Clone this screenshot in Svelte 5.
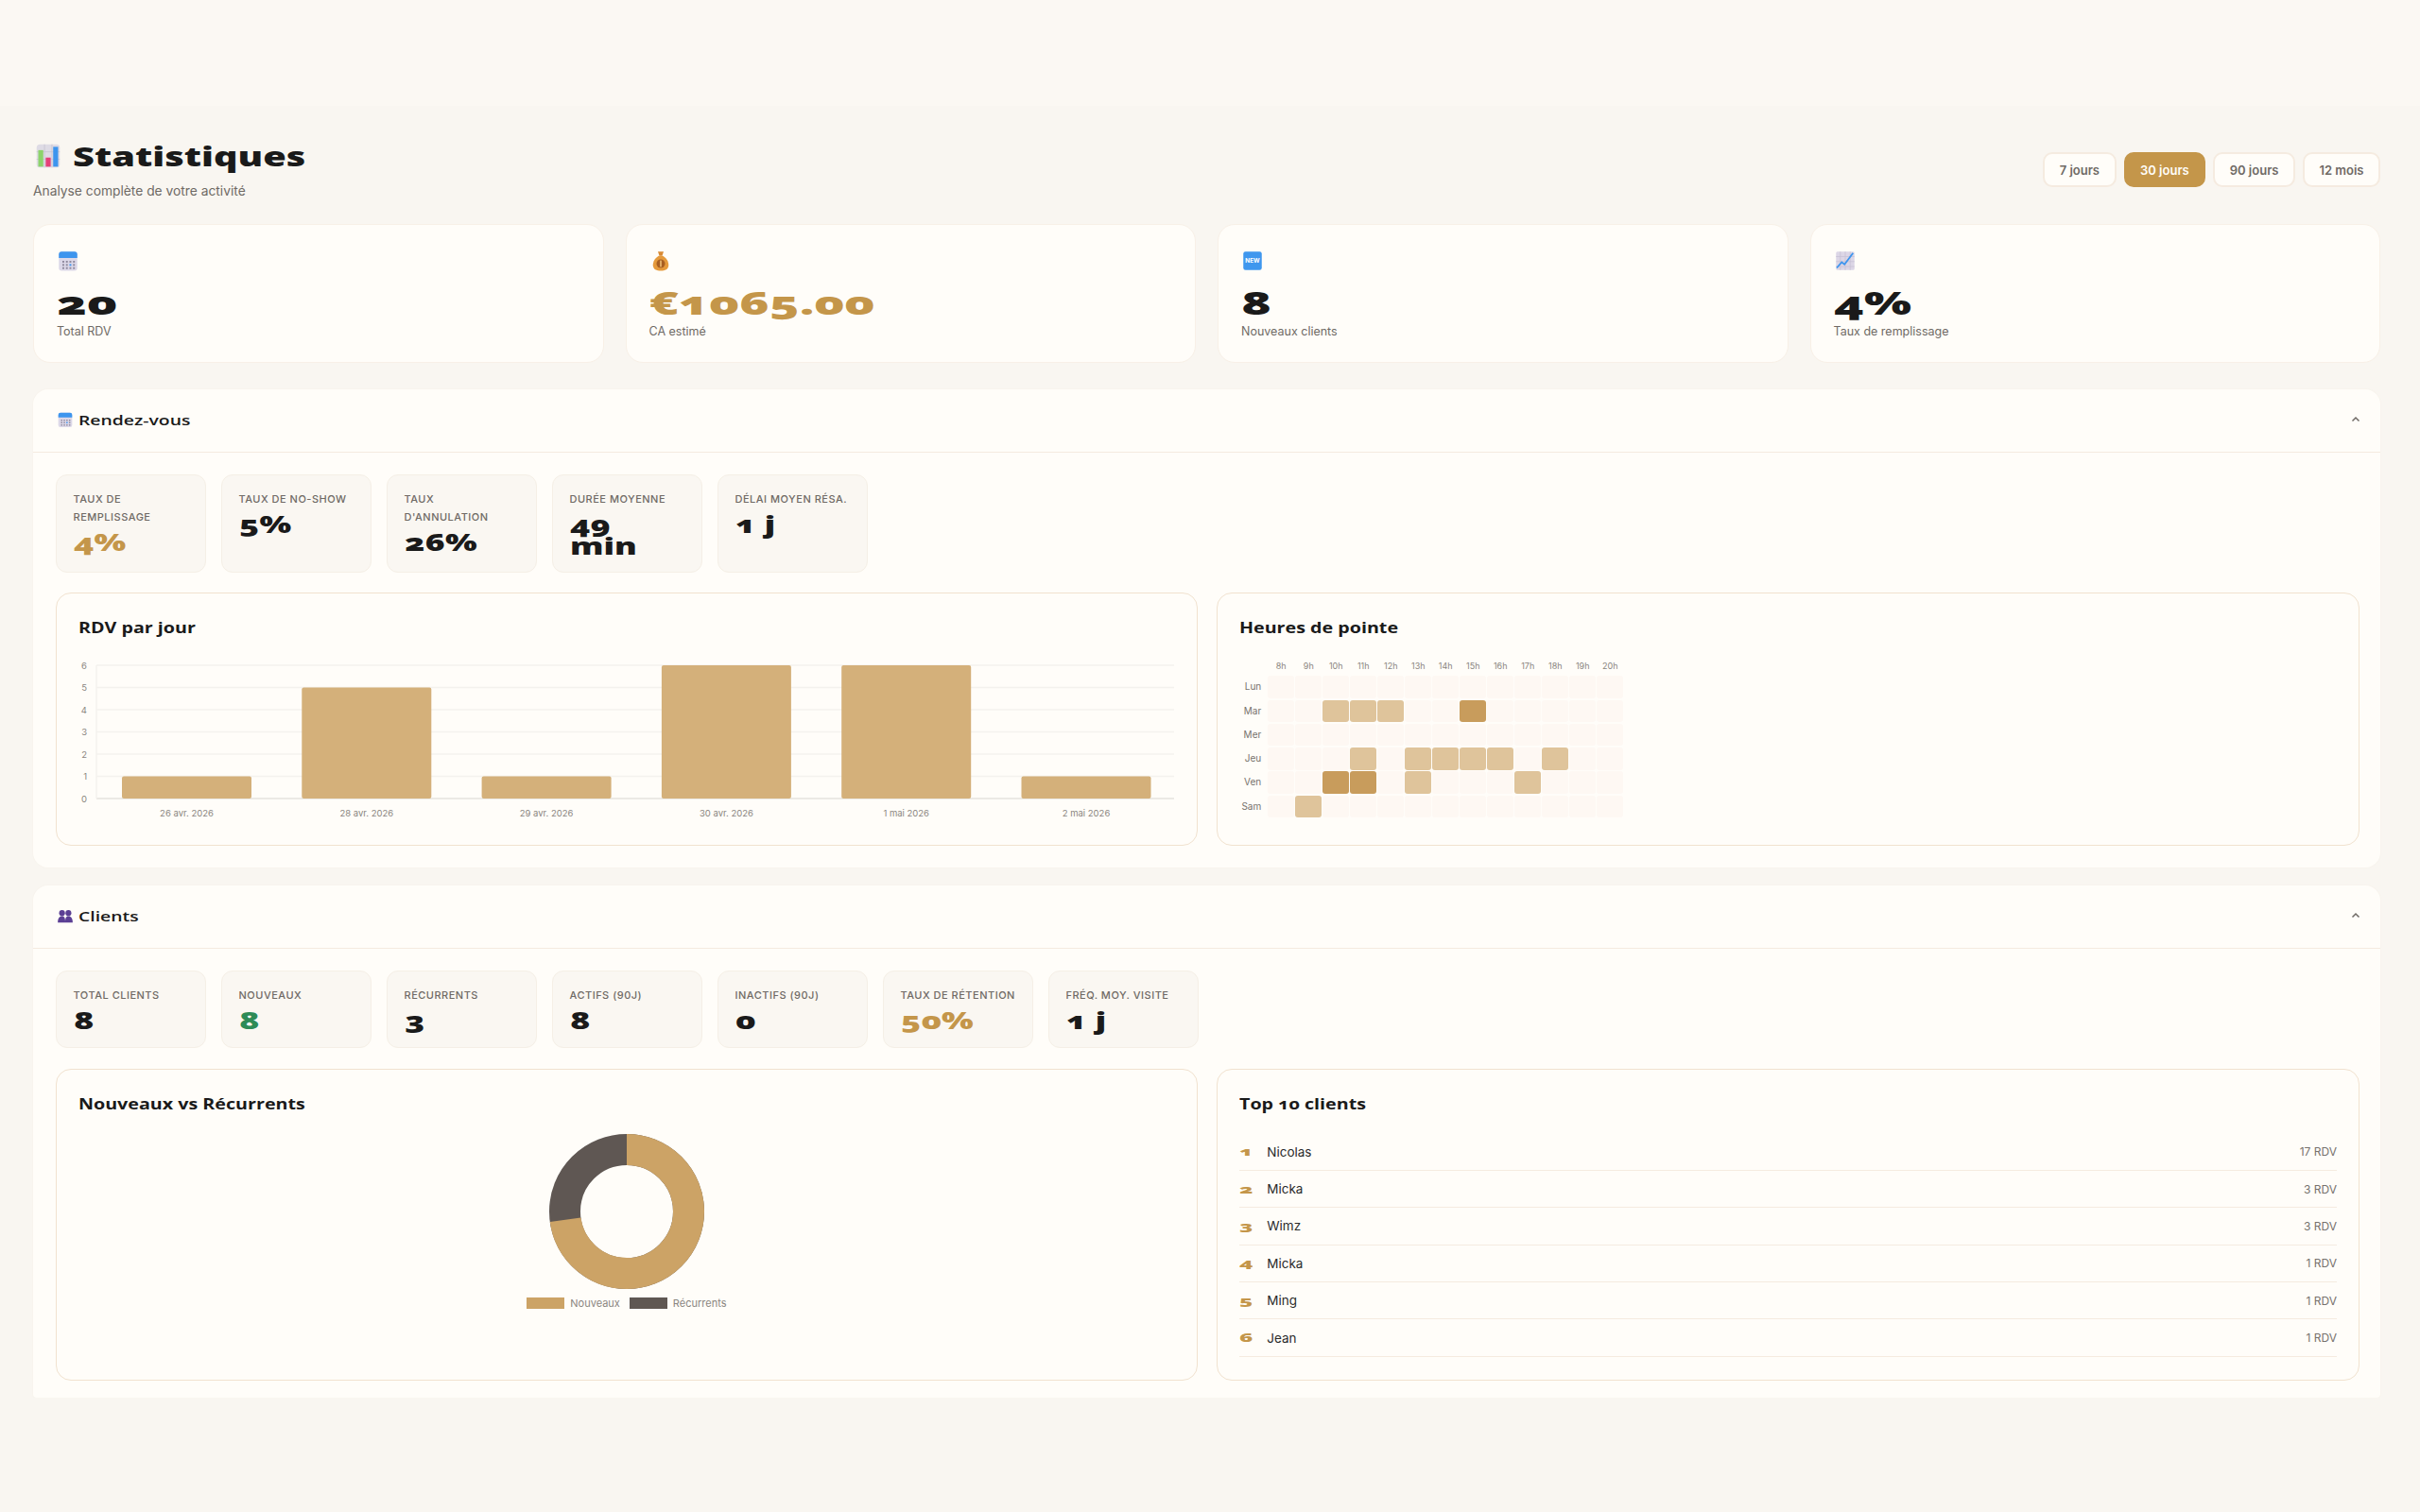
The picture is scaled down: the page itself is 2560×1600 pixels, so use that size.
<script>
  const periods = ["7 jours", "30 jours", "90 jours", "12 mois"];
  let period = $state("30 jours");

  const stats = [
    { icon: "calendar", value: "20", label: "Total RDV" },
    { icon: "bag", value: "€1065.00", label: "CA estimé", tone: "gold" },
    { icon: "new", value: "8", label: "Nouveaux clients" },
    { icon: "trend", value: "4%", label: "Taux de remplissage" }
  ];

  const rdvKpis = [
    { label: "Taux de remplissage", value: "4%", tone: "gold" },
    { label: "Taux de no-show", value: "5%" },
    { label: "Taux d'annulation", value: "26%" },
    { label: "Durée moyenne", value: "49\nmin" },
    { label: "Délai moyen résa.", value: "1 j" }
  ];

  const clientKpis = [
    { label: "Total clients", value: "8" },
    { label: "Nouveaux", value: "8", tone: "green" },
    { label: "Récurrents", value: "3" },
    { label: "Actifs (90j)", value: "8" },
    { label: "Inactifs (90j)", value: "0" },
    { label: "Taux\u00a0de\u00a0rétention", value: "50%", tone: "gold" },
    { label: "Fréq. moy. visite", value: "1 j" }
  ];

  const bars = [
    { label: "26 avr. 2026", n: 1 },
    { label: "28 avr. 2026", n: 5 },
    { label: "29 avr. 2026", n: 1 },
    { label: "30 avr. 2026", n: 6 },
    { label: "1 mai 2026", n: 6 },
    { label: "2 mai 2026", n: 1 }
  ];
  const barTop = 10;
  const barStep = 23.5;
  const ticks = [0, 1, 2, 3, 4, 5, 6];

  const hours = ["8h", "9h", "10h", "11h", "12h", "13h", "14h", "15h", "16h", "17h", "18h", "19h", "20h"];
  // one string per day, one digit per hour: 0 empty, 1 some, 2 busy
  const heat = [
    { day: "Lun", cells: "0000000000000" },
    { day: "Mar", cells: "0011100200000" },
    { day: "Mer", cells: "0000000000000" },
    { day: "Jeu", cells: "0001011110100" },
    { day: "Ven", cells: "0022010001000" },
    { day: "Sam", cells: "0100000000000" }
  ];

  const top = [
    { name: "Nicolas", n: "17 RDV" },
    { name: "Micka", n: "3 RDV" },
    { name: "Wimz", n: "3 RDV" },
    { name: "Micka", n: "1 RDV" },
    { name: "Ming", n: "1 RDV" },
    { name: "Jean", n: "1 RDV" }
  ];

  // donut: 8 nouveaux, 3 récurrents
  const R = 65.5;
  const C = 2 * Math.PI * R;
  const part = (8 / 11) * C;
</script>

{#snippet emoji(name, size)}
  <svg class="emoji" width={size} height={size} viewBox="0 0 32 32">
    {#if name === "calendar"}
      <rect x="3" y="3" width="26" height="27" rx="4" fill="#dcd8e8" />
      <path d="M3 12V7a4 4 0 0 1 4-4h18a4 4 0 0 1 4 4v5z" fill="#3d95ee" />
      {#each [16, 20.5, 25] as y}
        {#each [8, 13, 18, 23] as x}
          <rect {x} {y} width="2.6" height="2.6" fill={x === 18 && y === 20.5 ? "#3d95ee" : "#8f8a9e"} />
        {/each}
      {/each}
    {:else if name === "bag"}
      <path d="M12 3h8l-2 6h-4z" fill="#d98a35" />
      <path d="M13 9h6c5 3 8 8 8 13 0 6-5 8-11 8S5 28 5 22c0-5 3-10 8-13z" fill="#e59a3c" />
      <circle cx="16" cy="20" r="6" fill="#a85f22" />
      <rect x="15" y="15.5" width="2" height="9" fill="#f1c27a" />
    {:else if name === "new"}
      <rect x="3" y="3" width="26" height="26" rx="3" fill="#3f97ee" />
      <text x="16" y="19" text-anchor="middle" class="newtext">NEW</text>
    {:else if name === "trend"}
      <rect x="3" y="3" width="26" height="26" rx="2" fill="#dcd6e6" />
      <path d="M9 3v26M16 3v26M23 3v26M3 10h26M3 17h26M3 24h26" stroke="#c7c0d4" stroke-width="1" />
      <path d="M4 26l7-8 4 3 12-16" fill="none" stroke="#3d95ee" stroke-width="2.4" />
    {:else if name === "bars"}
      <rect x="2" y="2" width="28" height="28" rx="4" fill="#dedbe5" />
      <path d="M11.500 2v28M20.500 2v28M2 11h28M2 20h28" stroke="#c9c6d1" stroke-width="1" />
      <rect x="4" y="9" width="6" height="20" fill="#8cd36b" />
      <rect x="13" y="18" width="6" height="11" fill="#e53f78" />
      <rect x="22" y="5" width="6" height="24" fill="#3d95ee" />
    {:else if name === "people"}
      <g fill="#5b3f94">
        <circle cx="10" cy="11" r="5.500" />
        <path d="M2 29c0-8 3-12 8-12s6 4 6 12z" />
        <circle cx="22" cy="11" r="5.500" />
        <path d="M16 29c0-8 1-12 6-12s8 4 8 12z" />
      </g>
    {/if}
  </svg>
{/snippet}

{#snippet chevron()}
  <svg class="chevron" width="12" height="12" viewBox="0 0 12 12">
    <path d="M2.500 7.500L6 4l3.500 3.500" fill="none" stroke="#6f6a65" stroke-width="1.500" />
  </svg>
{/snippet}

{#snippet kpiRow(items)}
  <div class="kpis">
    {#each items as k}
      <div class="kpi">
        <div class="kpi-label">{k.label}</div>
        <div class="kpi-value wide {k.tone ?? ''}">{k.value}</div>
      </div>
    {/each}
  </div>
{/snippet}

<div class="strip"></div>

<main>
  <header>
    <div>
      <h1>{@render emoji("bars", 28)}<span class="wide">Statistiques</span></h1>
      <p>Analyse complète de votre activité</p>
    </div>
    <div class="periods">
      {#each periods as p}
        <button class:active={p === period} onclick={() => (period = p)}>{p}</button>
      {/each}
    </div>
  </header>

  <div class="stats">
    {#each stats as s}
      <div class="stat">
        {@render emoji(s.icon, 24)}
        <div class="stat-value wide {s.tone ?? ''}">{s.value}</div>
        <div class="stat-label">{s.label}</div>
      </div>
    {/each}
  </div>

  <section>
    <div class="section-head">
      <h2>{@render emoji("calendar", 18)}<span class="wide">Rendez-vous</span></h2>
      {@render chevron()}
    </div>
    <div class="section-body">
      {@render kpiRow(rdvKpis)}
      <div class="charts tall">
        <div class="chart">
          <h3><span class="wide">RDV par jour</span></h3>
          <svg class="bars" width="1160" height="182" viewBox="0 0 1160 182">
            {#each ticks as t}
              <line x1="19" x2="1159" y1={barTop + (6 - t) * barStep} y2={barTop + (6 - t) * barStep} class={t === 0 ? "axis" : "grid"} />
              <text x="9" y={barTop + (6 - t) * barStep + 3.500} text-anchor="end" class="tick">{t}</text>
            {/each}
            <line x1="19" x2="19" y1={barTop} y2={barTop + 6 * barStep} class="grid" />
            {#each bars as b, i}
              <rect x={46 + i * 190.3} y={barTop + (6 - b.n) * barStep} width="137" height={b.n * barStep} rx="2" class="bar" />
              <text x={114.500 + i * 190.3} y="170" text-anchor="middle" class="tick">{b.label}</text>
            {/each}
          </svg>
        </div>
        <div class="chart">
          <h3><span class="wide">Heures de pointe</span></h3>
          <div class="heat">
            <span></span>
            {#each hours as h}
              <span class="hour">{h}</span>
            {/each}
            {#each heat as row}
              <span class="day">{row.day}</span>
              {#each row.cells.split("") as c}
                <span class="cell lvl{c}"></span>
              {/each}
            {/each}
          </div>
        </div>
      </div>
    </div>
  </section>

  <section class="last">
    <div class="section-head">
      <h2>{@render emoji("people", 18)}<span class="wide">Clients</span></h2>
      {@render chevron()}
    </div>
    <div class="section-body">
      {@render kpiRow(clientKpis)}
      <div class="charts low">
        <div class="chart">
          <h3><span class="wide">Nouveaux vs Récurrents</span></h3>
          <div class="donut">
            <svg width="164" height="164" viewBox="0 0 164 164">
              <g transform="rotate(-90 82 82)" fill="none" stroke-width="33">
                <circle cx="82" cy="82" r={R} stroke="#5f5753" />
                <circle cx="82" cy="82" r={R} stroke="#cca366" stroke-dasharray="{part} {C}" />
              </g>
            </svg>
            <div class="legend">
              <i class="sw gold-bg"></i><span>Nouveaux</span>
              <i class="sw dark-bg"></i><span>Récurrents</span>
            </div>
          </div>
        </div>
        <div class="chart">
          <h3><span class="wide">Top 10 clients</span></h3>
          <ol>
            {#each top as t, i}
              <li>
                <span class="rank wide">{i + 1}</span>
                <span class="name">{t.name}</span>
                <span class="count">{t.n}</span>
              </li>
            {/each}
          </ol>
        </div>
      </div>
    </div>
  </section>
</main>

<style>
  :global(body) {
    background: #f9f6f1;
    color: #1a1a1a;
    font-family: Inter, "Liberation Sans", sans-serif;
  }

  .strip {
    height: 112px;
    background: #fbf8f3;
  }

  main {
    padding: 0 42px 0 35px;
  }

  /* the display face is a very wide grotesque: stretch a heavy one */
  .wide {
    display: inline-block;
    font-family: "Open Sans", Inter, sans-serif;
    font-feature-settings: "onum";
    font-weight: 800;
    transform: scaleX(1.42);
    transform-origin: left center;
    white-space: pre-line;
  }

  header {
    display: flex;
    justify-content: space-between;
    align-items: center;
    box-sizing: border-box;
    padding-top: 37px;
    height: 98px;
  }

  h1 {
    display: flex;
    align-items: center;
    gap: 12px;
    margin: 0 0 0 2px;
    font-size: 28px;
    line-height: 32px;
  }

  header p {
    margin: 13px 0 0;
    font-size: 13.8px;
    line-height: 16px;
    color: #6f6a65;
  }

  .periods {
    display: flex;
    gap: 8px;
  }

  .periods button {
    height: 37px;
    padding: 0 15.5px;
    border: 2px solid #f5ebe0;
    border-radius: 10px;
    background: #fffdf9;
    color: #6f6a65;
    font: 600 13px Inter, sans-serif;
  }

  .periods button.active {
    background: #c4964a;
    border-color: #c4964a;
    color: #fffdf9;
  }

  .stats {
    display: grid;
    grid-template-columns: repeat(4, 1fr);
    gap: 23px;
    margin-top: 27px;
  }

  .stat {
    height: 147px;
    box-sizing: border-box;
    padding: 26px 24px;
    background: #fffdf9;
    border: 1.5px solid #f8f0e7;
    border-radius: 18px;
  }

  .emoji {
    display: block;
    flex: none;
  }

  .newtext {
    font: 700 8.5px Inter, sans-serif;
    fill: #fff;
  }

  .stat-value {
    margin-top: 15px;
    font-size: 33px;
    line-height: 36px;
    transform: scaleX(1.6);
  }

  .stat-label {
    margin-top: 3.500px;
    font-size: 12.5px;
    line-height: 16px;
    color: #6f6a65;
  }

  .gold { color: #c4964a; }
  .green { color: #2e8b57; }

  section {
    margin-top: 28px;
    background: #fffdf9;
    border-radius: 16px;
    box-shadow: 0 0 0 1px #f8f4ee;
  }

  section + section {
    margin-top: 19px;
  }

  section.last {
    border-radius: 16px 16px 4px 4px;
  }

  .section-head {
    display: flex;
    justify-content: space-between;
    align-items: center;
    height: 64px;
    padding: 0 20px 2px 25px;
    border-bottom: 1.5px solid #f5ebe0;
  }

  h2 {
    display: flex;
    align-items: center;
    gap: 5px;
    margin: 0;
    font-size: 15px;
  }

  h2 .wide {
    font-weight: 600;
    transform: scaleX(1.29);
  }

  .section-body {
    padding: 23px 22px 23px 23.5px;
  }

  section.last .section-body {
    padding-bottom: 18px;
  }

  .kpis {
    display: flex;
    gap: 16px;
    align-items: stretch;
  }

  .kpi {
    box-sizing: border-box;
    width: 159px;
    padding: 16px 18px 14.5px;
    background: #faf7f2;
    border: 1.5px solid #f5efe6;
    border-radius: 12px;
  }

  .kpi-label {
    font-size: 11px;
    font-weight: 500;
    line-height: 19px;
    letter-spacing: 0.5px;
    text-transform: uppercase;
    color: #6f6a65;
  }

  .kpi-value {
    margin-top: 6px;
    font-size: 24px;
    line-height: 22.5px;
    transform: scaleX(1.48);
  }

  .charts {
    display: grid;
    grid-template-columns: 1fr 1fr;
    gap: 20px;
    margin-top: 21px;
  }

  .charts.tall .chart { height: 268px; }
  .charts.low { margin-top: 22px; }
  .charts.low .chart { height: 330px; }

  .chart {
    box-sizing: border-box;
    padding: 24px 23px;
    background: #fffdf9;
    border: 1.5px solid #f1e2cf;
    border-radius: 16px;
  }

  h3 {
    margin: 0;
    font-size: 16px;
    line-height: 24px;
  }

  h3 .wide {
    font-weight: 700;
    transform: scaleX(1.23);
  }

  .bars {
    display: block;
    margin-top: 18px;
  }

  .bars .grid {
    stroke: #f4f2ee;
    stroke-width: 1.5;
  }

  .bars .axis {
    stroke: #e6e3de;
    stroke-width: 1.5;
  }

  .bars .bar {
    fill: #d4b07a;
  }

  .bars .tick {
    font: 9.5px Inter, sans-serif;
    fill: #8a857f;
  }

  .heat {
    display: grid;
    grid-template-columns: 29px repeat(13, 28px);
    grid-auto-rows: 23.5px;
    column-gap: 1px;
    row-gap: 1.8px;
    margin-top: 14px;
  }

  .hour {
    text-align: center;
    font-size: 9px;
    line-height: 29px;
    color: #8a857f;
  }

  .day {
    padding-right: 6px;
    text-align: right;
    font-size: 10px;
    line-height: 23.5px;
    color: #77726d;
  }

  .cell {
    border-radius: 3px;
    background: #fef8f3;
  }

  .cell.lvl1 { background: #dfc49b; }
  .cell.lvl2 { background: #c89c5c; }

  .donut {
    display: flex;
    flex-direction: column;
    align-items: center;
    margin-top: 20px;
  }

  .legend {
    display: flex;
    align-items: center;
    gap: 6px;
    margin-top: 8px;
    font-size: 11px;
    color: #8a857f;
  }

  .sw {
    width: 40px;
    height: 12px;
  }

  .legend span + .sw {
    margin-left: 4px;
  }

  .gold-bg { background: #cca366; }
  .dark-bg { background: #5f5753; }

  ol {
    list-style: none;
    margin: 20px 0 0;
    padding: 0;
  }

  li {
    display: flex;
    align-items: center;
    height: 39.4px;
    box-sizing: border-box;
    border-bottom: 1.5px solid #f5ebe0;
  }

  .rank {
    width: 29px;
    font-size: 12px;
    color: #c4964a;
    transform: scaleX(2);
  }

  .name {
    flex: 1;
    font-size: 13.5px;
    font-weight: 400;
    color: #2b2b2b;
  }

  .count {
    font-size: 12px;
    color: #77726d;
  }
</style>
